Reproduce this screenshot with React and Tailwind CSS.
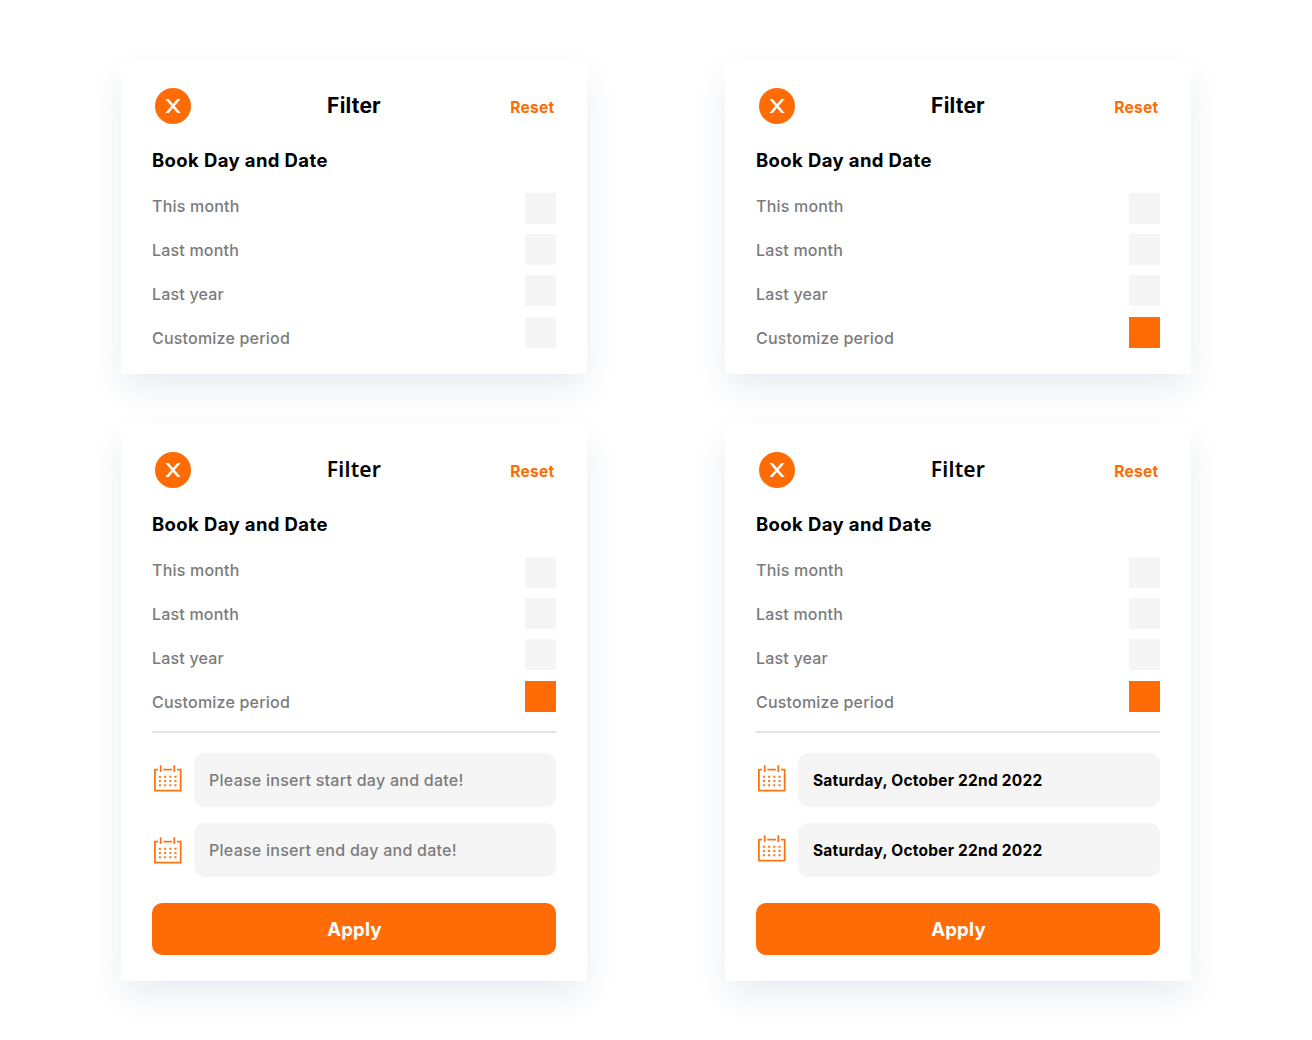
import React from "react";

const PERIODS = ["This month", "Last month", "Last year", "Customize period"];

function CloseButton() {
  return (
    <button aria-label="Close" className="flex size-9 items-center justify-center rounded-full bg-[#ff6c06]">
      <svg width="16" height="14" viewBox="0 0 16 14" className="-ml-px overflow-hidden" stroke="#fff" strokeWidth="2.5">
        <path d="M1 -1.2 15 15.2M15 -1.2 1 15.2" />
      </svg>
    </button>
  );
}

function CalendarIcon({ className }) {
  return (
    <svg width="28" height="28" viewBox="0 0 28 28" fill="none" stroke="#ff7411" strokeWidth="1.8" className={className}>
      <path d="M4.2 4.6H0.9V25.6H26.7V4.6H23M9.3 4.6H18" strokeLinejoin="round" />
      <path d="M6.7 0.3V7.1M20.3 0.3V7.1" />
      <path d="M4.9 11.7H23.5M4.9 15.9H23.5M4.9 20.2H23.5" strokeWidth="2" strokeDasharray="2 3.2" />
    </svg>
  );
}

function DateField({ value, placeholder, iconClass }) {
  return (
    <div className="flex items-start">
      <div className="w-[42px] shrink-0 pl-0.5">
        <CalendarIcon className={iconClass} />
      </div>
      <div className="flex h-[54px] flex-1 items-center rounded-[10px] bg-[#f5f5f5] pl-[15px]">
        {value ? (
          <span className="text-[15.5px] font-bold tracking-[0.22px] text-black">{value}</span>
        ) : (
          <span className="text-[16px] font-medium tracking-[0.26px] text-[#7b7b7b]">{placeholder}</span>
        )}
      </div>
    </div>
  );
}

function FilterCard({ selected, titleClass, children }) {
  return (
    <section className="w-[466px] bg-white px-[31px] pt-7 shadow-[0_15px_34px_-4px_rgba(15,60,110,0.115)]">
      <header className="grid h-9 grid-cols-[1fr_auto_1fr] items-center">
        <div className="pl-[3px]">
          <CloseButton />
        </div>
        <h2 className={titleClass}>Filter</h2>
        <button className="justify-self-end pt-[3px] pr-[1.5px] text-[15.5px] font-bold tracking-[0.28px] text-[#ff6c06]">Reset</button>
      </header>
      <h3 className="mt-6 h-6 text-[18.5px] leading-6 font-bold tracking-[0.38px] text-black">Book Day and Date</h3>
      <div className="mt-[13px] flex justify-between">
        <ul className="-mt-px">
          {PERIODS.map((p) => (
            <li key={p} className="h-11 text-[16px] leading-[44px] font-medium tracking-[0.2px] text-[#7b7b7b]">{p}</li>
          ))}
        </ul>
        <div className="flex h-44 flex-col gap-[10.4px] pt-[7.7px]">
          {PERIODS.map((p) => (
            <div key={p} className={p === selected ? "size-[31px] bg-[#ff6c06]" : "size-[31px] bg-[#f5f5f5]"} />
          ))}
        </div>
      </div>
      {children}
    </section>
  );
}

function DateRange({ children }) {
  return (
    <>
      <div className="mt-1.5 h-0.5 bg-[#e3e3e3]" />
      <div className="flex flex-col gap-4 pt-[20.4px]">{children}</div>
      <button className="mt-[26px] flex h-[51.6px] w-full items-center justify-center rounded-[10px] bg-[#ff6c06] pt-[2px] pl-px text-[18.5px] font-bold tracking-[0.25px] text-white">
        Apply
      </button>
    </>
  );
}

const TITLE = "text-[21px] font-bold tracking-[0.2px] text-black";
const TITLE_ALT = "-mt-px font-['Noto_Sans',sans-serif] text-[21px] font-semibold tracking-[0.2px] text-black";
const DATE = "Saturday, October 22nd 2022";
const CUSTOM = "Customize period";

export default function App() {
  return (
    <main className="grid h-[1040px] w-[1312px] grid-cols-[466px_466px] grid-rows-[314px_557px] gap-x-[138px] gap-y-[50px] overflow-hidden bg-white pt-[60px] pl-[121px] font-['Inter',sans-serif]">
      <FilterCard titleClass={TITLE} />
      <FilterCard titleClass={TITLE} selected={CUSTOM} />
      <FilterCard titleClass={TITLE_ALT} selected={CUSTOM}>
        <DateRange>
          <DateField placeholder="Please insert start day and date!" iconClass="mt-[11.5px]" />
          <DateField placeholder="Please insert end day and date!" iconClass="mt-[14px]" />
        </DateRange>
      </FilterCard>
      <FilterCard titleClass={TITLE_ALT} selected={CUSTOM}>
        <DateRange>
          <DateField value={DATE} iconClass="mt-[11.5px]" />
          <DateField value={DATE} iconClass="mt-[11.5px]" />
        </DateRange>
      </FilterCard>
    </main>
  );
}
